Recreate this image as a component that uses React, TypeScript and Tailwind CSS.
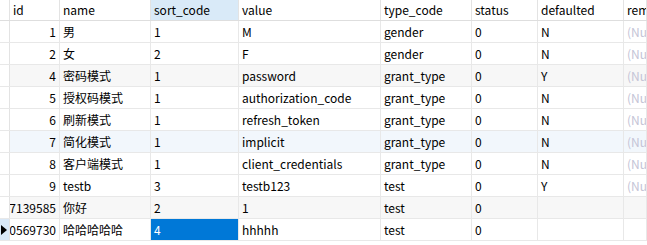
const columns = [
  { key: 'id', w: 'w-[50px]', align: 'right' },
  { key: 'name', w: 'w-[91px]' },
  { key: 'sort_code', w: 'w-[88px]' },
  { key: 'value', w: 'w-[142px]' },
  { key: 'type_code', w: 'w-[91px]' },
  { key: 'status', w: 'w-[66px]' },
  { key: 'defaulted', w: 'w-[86px]' },
  { key: 'remark', w: 'flex-1' },
];

type Row = { cells: (string | null)[]; bg?: string; current?: boolean };

const rows: Row[] = [
  { cells: ['1', '男', '1', 'M', 'gender', '0', 'N', null] },
  { cells: ['2', '女', '2', 'F', 'gender', '0', 'N', null] },
  { cells: ['4', '密码模式', '1', 'password', 'grant_type', '0', 'Y', null], bg: 'bg-[#f7f7f7]' },
  { cells: ['5', '授权码模式', '1', 'authorization_code', 'grant_type', '0', 'N', null] },
  { cells: ['6', '刷新模式', '1', 'refresh_token', 'grant_type', '0', 'N', null] },
  { cells: ['7', '简化模式', '1', 'implicit', 'grant_type', '0', 'N', null], bg: 'bg-[#f2f7fc]' },
  { cells: ['8', '客户端模式', '1', 'client_credentials', 'grant_type', '0', 'N', null] },
  { cells: ['9', 'testb', '3', 'testb123', 'test', '0', 'Y', null] },
  { cells: ['1557407139585', '你好', '2', '1', 'test', '0', '', ''], bg: 'bg-[#f7f7f7]' },
  { cells: ['1557410569730', '哈哈哈哈哈', '4', 'hhhhh', 'test', '0', '', ''], current: true },
];

const App = () => {
  return (
    <div className="w-[647px] h-[245px] bg-white overflow-hidden text-[12px] text-black font-['Microsoft_YaHei','Noto_Sans_CJK_SC',sans-serif]">
      {/* Header */}
      <div className="flex h-[21px] border-b border-[#dedede] bg-white">
        <div className="w-[10px] shrink-0 border-r border-[#e3e3e3]" />
        {columns.map((c) => (
          <div
            key={c.key}
            className={`${c.w} shrink-0 border-r border-[#e3e3e3] px-[3px] leading-[20px] whitespace-nowrap overflow-hidden ${
              c.key === 'sort_code' ? 'bg-[#d9eaf8]' : ''
            }`}
          >
            {c.key === 'remark' ? 'remark' : c.key}
          </div>
        ))}
      </div>

      {/* Rows */}
      {rows.map((r, i) => (
        <div key={i} className={`flex h-[22px] border-b border-[#e8e8e8] ${r.bg ?? 'bg-white'}`}>
          <div
            className={`w-[10px] shrink-0 border-r border-[#e3e3e3] flex items-center ${
              r.current ? 'bg-[#d9e8f7]' : 'bg-white'
            }`}
          >
            {r.current && (
              <svg width="6" height="10" viewBox="0 0 6 10" className="ml-[1px]">
                <path d="M0 0 L6 5 L0 10 Z" fill="#000" />
              </svg>
            )}
          </div>
          {columns.map((c, j) => {
            const v = r.cells[j];
            const selected = r.current && c.key === 'sort_code';
            return (
              <div
                key={c.key}
                className={`${c.w} shrink-0 border-r border-[#e8e8e8] px-[3px] leading-[21px] whitespace-nowrap overflow-hidden flex ${
                  c.align === 'right' ? 'justify-end' : ''
                } ${selected ? 'bg-[#0078d7] text-white' : ''} ${v === null ? 'text-[#c4c4d6]' : ''}`}
              >
                <span className="shrink-0">{v === null ? '(Null)' : v}</span>
              </div>
            );
          })}
        </div>
      ))}
    </div>
  );
};

export default App;
